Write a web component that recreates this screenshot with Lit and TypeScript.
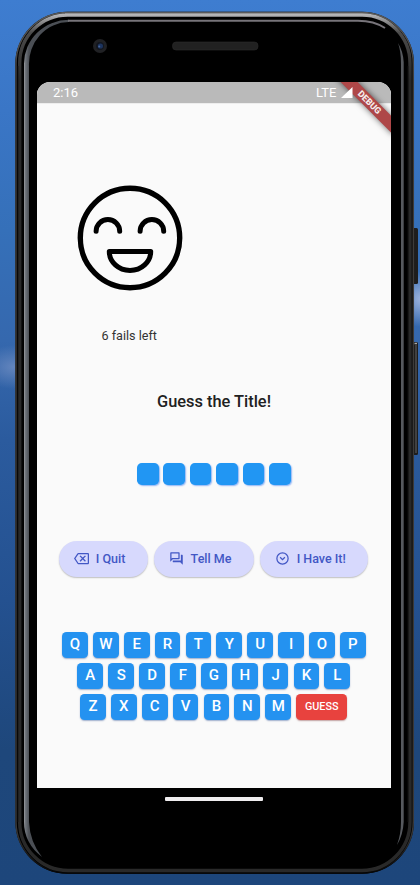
import { LitElement, html, css, svg } from "lit";
import { customElement, property } from "lit/decorators.js";

const ROWS = ["QWERTYUIOP", "ASDFGHJKL", "ZXCVBNM"];

const backspace = svg`<path d="M22 3H7c-.69 0-1.23.35-1.59.88L0 12l5.41 8.11c.36.53.9.89 1.59.89h15c1.1 0 2-.9 2-2V5c0-1.1-.9-2-2-2zm0 16H7.07L2.4 12l4.66-7H22v14zm-11.59-2L14 13.41 17.59 17 19 15.59 15.41 12 19 8.41 17.59 7 14 10.59 10.41 7 9 8.41 12.59 12 9 15.59z"/>`;
const forum = svg`<path d="M15 4v7H5.17L4 12.17V4h11m1-2H3c-.55 0-1 .45-1 1v14l4-4h10c.55 0 1-.45 1-1V3c0-.55-.45-1-1-1zm5 4h-2v9H6v2c0 .55.45 1 1 1h11l4 4V7c0-.55-.45-1-1-1z"/>`;
const expandCircle = svg`<path d="M12 2a10 10 0 1 0 0 20 10 10 0 0 0 0-20zm0 18a8 8 0 1 1 0-16 8 8 0 0 1 0 16zM15.1 9.3 12 12.4 8.9 9.3 7.5 10.7 12 15.2l4.5-4.5z"/>`;

@customElement("action-chip")
class ActionChip extends LitElement {
  @property() label = "";
  @property({ attribute: false }) icon: unknown;
  static styles = css`
    :host { display: block; }
    button {
      box-sizing: border-box; width: 100%; height: 36px; border: 0; padding: 0 0 0 14.5px;
      display: flex; align-items: center; gap: 7px; border-radius: 18px;
      background: #d7d9fd; color: #4257c5; white-space: nowrap;
      font: 500 12.5px/36px Roboto, sans-serif;
      box-shadow: 0 1px 1.5px rgba(0, 0, 0, 0.24);
    }
    svg { width: 15px; height: 15px; fill: currentColor; flex: none; }
  `;
  render() {
    return html`<button><svg viewBox="0 0 24 24">${this.icon}</svg><span>${this.label}</span></button>`;
  }
}

@customElement("phone-frame")
class PhoneFrame extends LitElement {
  static styles = css`
    :host { display: block; }
    svg { display: block; width: 420px; height: 885px; }
  `;
  render() {
    return html`<svg viewBox="0 0 420 885" fill="none">
      <defs>
        <linearGradient id="edge" x1="0" y1="11" x2="0" y2="874" gradientUnits="userSpaceOnUse">
          <stop offset="0" stop-color="#5a5a5a"/><stop offset=".08" stop-color="#3f3d3b"/><stop offset=".95" stop-color="#383736"/><stop offset="1" stop-color="#050505"/>
        </linearGradient>
        <linearGradient id="shine" x1="0" y1="12" x2="0" y2="80" gradientUnits="userSpaceOnUse">
          <stop offset="0" stop-color="#c4c4c6"/><stop offset=".08" stop-color="#a5a5a7"/><stop offset=".3" stop-color="#4c4c4c"/><stop offset="1" stop-color="#292929"/>
        </linearGradient>
        <linearGradient id="rim" x1="24" y1="0" x2="29" y2="0" gradientUnits="userSpaceOnUse">
          <stop offset="0" stop-color="#9a9ca0"/><stop offset=".3" stop-color="#6f747b"/><stop offset="1" stop-color="#4b4f55"/>
        </linearGradient>
      </defs>
      <rect x="412" y="228" width="6" height="56" rx="1.5" fill="#1d1d1d"/>
      <rect x="412" y="342" width="6" height="113" rx="1.5" fill="#1d1d1d"/>
      <path d="M416 345V453" stroke="#666" stroke-width="1"/>
      <path d="M414.5 343.5H417" stroke="#aaa" stroke-width="1.5"/>
      <rect x="15.3" y="11.7" width="398.7" height="862" rx="52" fill="#000"/>
      <rect x="16" y="12.4" width="397.3" height="860.6" rx="51.5" stroke="url(#edge)" stroke-width="1.5"/>
      <path d="M65 15H362A48 48 0 0 1 410 63V822A48 48.5 0 0 1 362 870.5H68A48.3 48.5 0 0 1 19.7 822V63A48 48 0 0 1 67.7 15Z" stroke="url(#shine)" stroke-width="3.4"/>
      <path d="M18 66V822M21.7 66V822M408 66V822" stroke="#151515" stroke-width=".8"/>
      <path d="M24 64A45 44 0 0 1 69 19.8V22A40 42 0 0 0 29 66V822Q30 842 42 857Q24 843 24 822Z" fill="url(#rim)"/>
      <path d="M68 20.7H358Q374 20.7 385 28" stroke="#77747a" stroke-width="2"/>
      <path d="M398 43Q403 51 403.7 62V822Q403 835 397 845Q401 834 401 822V64Q401 51 398 43Z" fill="#56595e"/>
      <circle cx="100" cy="46" r="7" fill="#202124"/>
      <circle cx="100" cy="46" r="4" fill="#12161f"/>
      <circle cx="100.4" cy="46" r="2.6" fill="#1c345f"/>
      <circle cx="99.2" cy="46.6" r="1" fill="#48659b"/>
      <rect x="172.5" y="42" width="85.5" height="8" rx="3.5" fill="#212121" stroke="#2c2c2c" stroke-width=".6"/>
    </svg>`;
  }
}

@customElement("app-root")
class AppRoot extends LitElement {
  static styles = css`
    :host {
      display: block; position: relative; width: 420px; height: 885px; overflow: hidden;
      font-family: Roboto, sans-serif;
      background:
        radial-gradient(ellipse 30px 28px at 422px 299px, #9eb4dd, transparent),
        radial-gradient(ellipse 34px 22px at 14px 367px, #6385bd, transparent),
        linear-gradient(#3e7dd0 0, #3a76c6 110px, #3570b9 230px, #3568ae 340px, #2b5b9e 440px, #245190 600px, #1e477b 750px, #1d467b 885px);
    }
    phone-frame { position: absolute; inset: 0; }
    .device { position: relative; display: flex; flex-direction: column; padding: 82px 29px 0 37px; }
    .screen {
      position: relative; height: 706px; background: #fafafa; overflow: hidden;
      border-radius: 13px 13px 0 0; display: flex; flex-direction: column;
    }
    .status {
      flex: none; height: 21px; background: #bababa; color: #fff; display: flex; align-items: center;
      font-size: 13px; line-height: 21px; padding: 0 38.5px 0 16px; box-shadow: 0 1px 0 #ededed;
    }
    .lte { margin-left: auto; font-size: 13px; }
    .signal { position: relative; z-index: 1; flex: none; width: 11.5px; height: 11px; margin-left: 4.5px; fill: #fff; }
    .ribbon {
      position: absolute; top: 14px; right: -18px; width: 80px; height: 12.4px;
      transform: rotate(45deg); background: #ae4748; color: #f6eded; text-align: center; text-indent: 1px;
      font: 800 9px/12.6px Roboto, sans-serif; box-shadow: 0 0 6px rgba(0, 0, 0, 0.6);
    }
    .face { width: 106px; height: 106px; margin: 82px 0 0 40.2px; display: block; fill: none; stroke: #000; }
    .fails { margin: 35.5px 0 0 64.5px; font-size: 12.6px; line-height: 18px; color: #333; }
    h1 { margin: 46.5px 0 0; text-align: center; font-size: 16.4px; font-weight: 500; line-height: 22px; color: #212121; }
    .tiles { display: flex; gap: 4.7px; margin: 50px 0 0 100px; }
    .tile { width: 21.7px; height: 21.7px; border-radius: 4.8px; background: #2196f3; box-shadow: 1px 1px 1.5px #8fb4f5; }
    .actions { display: grid; grid-template-columns: 88.5px 99.8px 107.7px; gap: 6.3px; margin: 56.1px 0 0 22.3px; }
    .keys { display: flex; flex-direction: column; gap: 5.2px; margin: 55.5px 0 0 25.1px; }
    .row { display: flex; gap: 5.2px; }
    .row:nth-child(2) { padding-left: 15.4px; }
    .row:nth-child(3) { padding-left: 18px; }
    .key {
      width: 25.7px; height: 25.7px; padding: 0; border: 0; border-radius: 4.6px; background: #2492f0; color: #fff;
      font: 500 15px/25.7px Roboto, sans-serif; text-align: center; box-shadow: 0 1px 1.5px rgba(30, 70, 140, 0.42);
    }
    .guess { width: 51px; background: #e8423e; font-size: 10.8px; box-shadow: 0 1px 1.5px rgba(110, 30, 30, 0.4); }
    .pill { width: 97.5px; height: 3.5px; border-radius: 1px; background: #efedef; margin: 9px 0 0 128px; }
  `;
  render() {
    return html`
      <phone-frame></phone-frame>
      <main class="device">
        <section class="screen">
          <div class="status">
            <span>2:16</span><span class="lte">LTE</span>
            <svg class="signal" viewBox="0 0 12 11" preserveAspectRatio="none"><path d="M12 0V11H0Z"/></svg>
          </div>
          <svg class="face" viewBox="77.3 185 106 106" stroke-width="5.4" stroke-linecap="round" stroke-linejoin="round">
            <circle cx="130.3" cy="238" r="49.7"/>
            <path d="M96.4 231.2a11.8 11.6 0 0 1 23.6 0M140.4 231.2a11.8 11.6 0 0 1 23.6 0" stroke-width="5"/>
            <path d="M109.6 251.5H151A20.7 19 0 0 1 109.6 251.5Z" stroke-width="5"/>
          </svg>
          <div class="fails">6 fails left</div>
          <h1>Guess the Title!</h1>
          <div class="tiles">${Array.from({ length: 6 }, () => html`<div class="tile"></div>`)}</div>
          <div class="actions">
            <action-chip label="I Quit" .icon=${backspace}></action-chip>
            <action-chip label="Tell Me" .icon=${forum}></action-chip>
            <action-chip label="I Have It!" .icon=${expandCircle}></action-chip>
          </div>
          <div class="keys">
            ${ROWS.map((row, i) => html`<div class="row">
              ${[...row].map((k) => html`<button class="key">${k}</button>`)}
              ${i === 2 ? html`<button class="key guess">GUESS</button>` : ""}
            </div>`)}
          </div>
          <div class="ribbon">DEBUG</div>
        </section>
        <div class="pill"></div>
      </main>`;
  }
}
